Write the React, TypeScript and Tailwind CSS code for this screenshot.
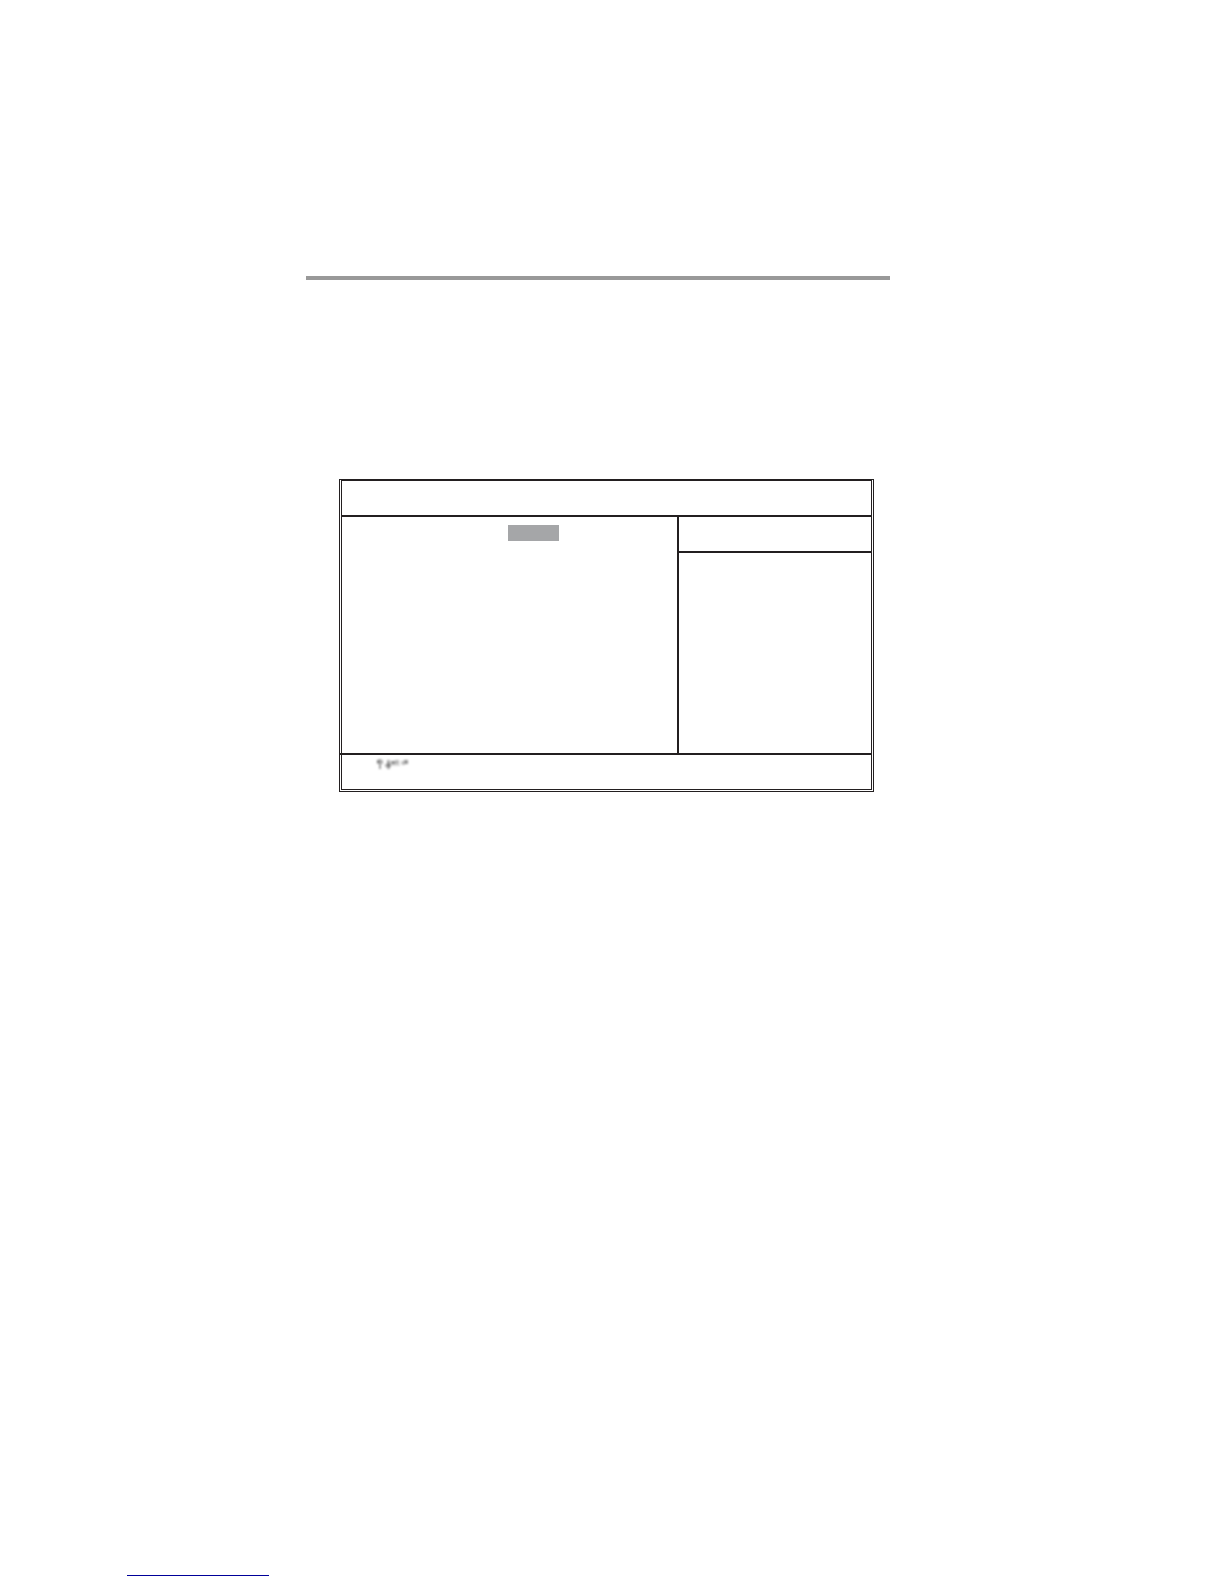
// Faded arrow-key hints in the footer of the setup screen
function KeyHints() {
  return (
    <svg width="36" height="16" viewBox="0 0 36 16" className="blur-[1px]" aria-hidden="true">
      {/* up */}
      <path d="M1 3h6v4H1z" fill="#b5b5b5" />
      <path d="M3 2h2v10H3z" fill="#a0a0a0" />
      <path d="M1 3h2v3H1z" fill="#757575" />
      {/* down */}
      <path d="M11 3h3v9h-3z" fill="#ababab" />
      <path d="M9 7h6v3H9z" fill="#b5b5b5" />
      <path d="M11 6h3v4h-3z" fill="#7d7d7d" />
      {/* right */}
      <path d="M15 4h4v3h-4z" fill="#8f8f8f" />
      <path d="M19 3h4v4h-4z" fill="#b8b8b8" />
      <path d="M15 7h9v2h-9z" fill="#dadada" />
      {/* left */}
      <path d="M25 4h4v3h-4z" fill="#c8c8c8" />
      <path d="M28 3h4v4h-4z" fill="#949494" />
      <path d="M26 6h3v2h-3z" fill="#bdbdbd" />
    </svg>
  );
}

function SetupScreen() {
  return (
    <section className="mr-4 ml-[33px] border-x-[3px] border-t-2 border-b-[3px] border-[#231f20] [border-bottom-style:double] [border-left-style:double] [border-right-style:double]">
      <header className="h-9 border-b-2 border-[#231f20]" />

      <div className="flex h-[236px]">
        <div className="flex-1 pt-2 pl-[166px]">
          <div className="h-4 w-[51px] bg-[#a5a6a8]" />
        </div>
        <aside className="w-[194px] border-l-2 border-[#231f20]">
          <div className="h-9 border-b-2 border-[#231f20]" />
        </aside>
      </div>

      {/* The divider runs across the left frame */}
      <footer className="-ml-[3px] h-9 border-t-2 border-[#231f20] pt-0.5 pl-[37px]">
        <KeyHints />
      </footer>
    </section>
  );
}

export default function App() {
  return (
    <div className="flex min-h-screen flex-col bg-white font-['Liberation_Sans',sans-serif]">
      <main className="pt-[276px] pr-[334px] pl-[306px]">
        <hr className="mb-[199px] h-1 border-0 bg-[#999999]" />
        <SetupScreen />
      </main>

      <div className="mt-auto flex pb-2 pl-[127px]">
        <a href="#" aria-label="Link" className="h-4 w-[142px] border-b border-[#000099]" />
      </div>
    </div>
  );
}
